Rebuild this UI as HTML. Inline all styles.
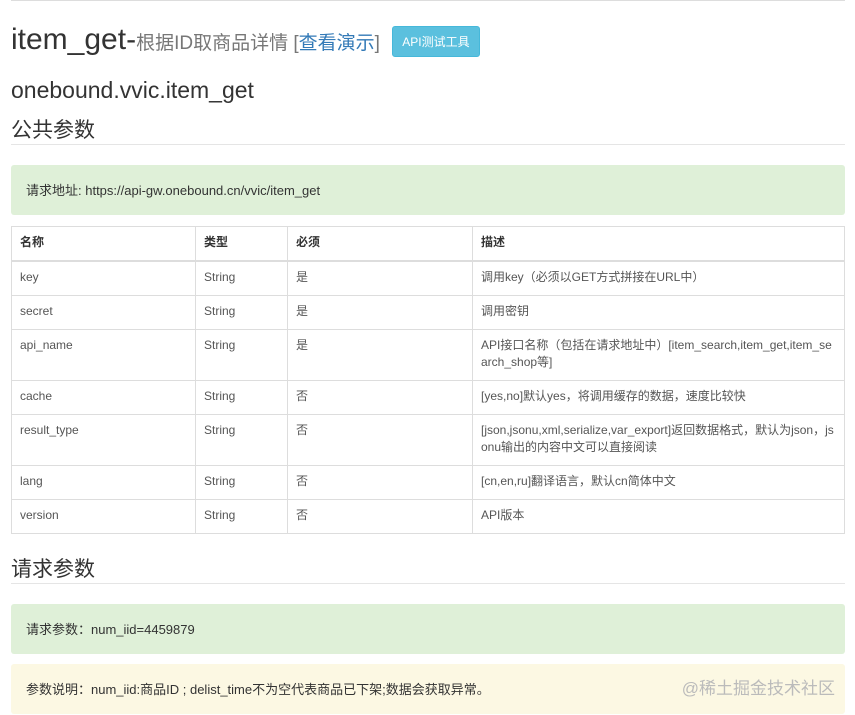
<!DOCTYPE html>
<html><head><meta charset="utf-8"><style>
*{box-sizing:border-box}
body{margin:0;width:855px;height:715px;overflow:hidden;background:#fff;font-family:"Liberation Sans","Noto Sans CJK SC",sans-serif;color:#333;position:relative}
.topline{position:absolute;left:11px;right:10px;top:0;border-top:1px solid #ddd}
.a{position:absolute;left:11px;white-space:nowrap}
.h1{top:23px;font-size:30px;color:#333}
.h1 small{font-size:19px;color:#777}
.h1 small a{color:#337ab7;text-decoration:none}
.btn{display:inline-block;background:#5bc0de;border:1px solid #46b8da;color:#fff;font-size:12px;border-radius:3px;padding:6px 9px;vertical-align:3px;margin-left:4px}
.h2{top:77px;font-size:23px}
.h3{font-size:21px;right:10px;border-bottom:1px solid #e5e5e5}
.alert{position:absolute;left:11px;right:10px;height:50px;font-size:13px;padding:15px 15px;border-radius:3px}
.g{background:#dff0d8;color:#333}
.y{background:#fcf8e3;color:#333}
table{position:absolute;left:11px;top:226px;width:834px;border-collapse:collapse;font-size:12px;color:#555}
td,th{border:1px solid #ddd;padding:7px 8px 9px;text-align:left;vertical-align:top;line-height:17px;word-break:break-all}
th{font-weight:bold;height:34px;border-bottom:2px solid #ddd;color:#333}
td{height:34px}
.wm{position:absolute;right:20px;top:674px;font-size:17px;color:#bbb}
</style></head><body>
<div class="topline"></div>
<div class="a h1">item_get-<small>根据ID取商品详情 [<a>查看演示</a>]</small> <span class="btn">API测试工具</span></div>
<div class="a h2">onebound.vvic.item_get</div>
<div class="a h3" style="top:114px;height:31px">公共参数</div>
<div class="alert g" style="top:165px">请求地址: https://api-gw.onebound.cn/vvic/item_get</div>
<table>
<colgroup><col style="width:184px"><col style="width:92px"><col style="width:185px"><col></colgroup>
<tr><th>名称</th><th>类型</th><th>必须</th><th>描述</th></tr>
<tr><td>key</td><td>String</td><td>是</td><td>调用key（必须以GET方式拼接在URL中）</td></tr>
<tr><td>secret</td><td>String</td><td>是</td><td>调用密钥</td></tr>
<tr><td>api_name</td><td>String</td><td>是</td><td>API接口名称（包括在请求地址中）[item_search,item_get,item_search_shop等]</td></tr>
<tr><td>cache</td><td>String</td><td>否</td><td>[yes,no]默认yes，将调用缓存的数据，速度比较快</td></tr>
<tr><td>result_type</td><td>String</td><td>否</td><td>[json,jsonu,xml,serialize,var_export]返回数据格式，默认为json，jsonu输出的内容中文可以直接阅读</td></tr>
<tr><td>lang</td><td>String</td><td>否</td><td>[cn,en,ru]翻译语言，默认cn简体中文</td></tr>
<tr><td>version</td><td>String</td><td>否</td><td>API版本</td></tr>
</table>
<div class="a h3" style="top:553px;height:31px">请求参数</div>
<div class="alert g" style="top:604px">请求参数：num_iid=4459879</div>
<div class="alert y" style="top:664px">参数说明：num_iid:商品ID ; delist_time不为空代表商品已下架;数据会获取异常。</div>
<div class="wm">@稀土掘金技术社区</div>
</body></html>
